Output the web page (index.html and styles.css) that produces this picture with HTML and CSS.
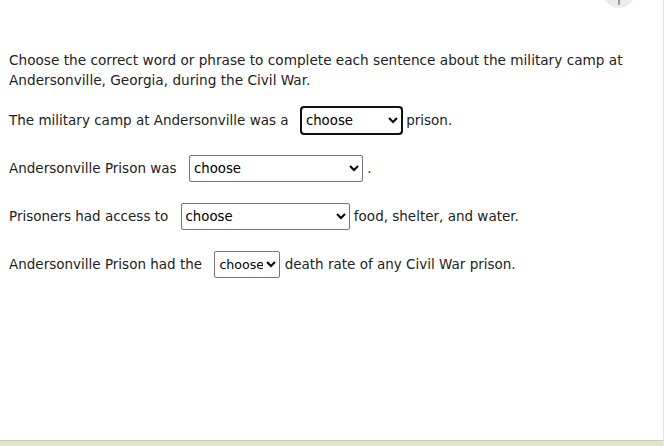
FILE: index.html
```html
<!DOCTYPE html>
<html lang="en">
<head>
<meta charset="utf-8">
<title>Andersonville</title>
<link rel="stylesheet" href="styles.css">
</head>
<body>
<div class="page">
  <div class="handle"><span class="handle-bar"></span></div>
  <main class="content">
    <p class="intro">Choose the correct word or phrase to complete each sentence about the military camp at Andersonville, Georgia, during the Civil War.</p>
    <p class="row">The military camp at Andersonville was a <select class="sel sel-active w1"><option>choose</option></select> prison.</p>
    <p class="row">Andersonville Prison was <select class="sel w2"><option>choose</option></select> .</p>
    <p class="row">Prisoners had access to <select class="sel w3"><option>choose</option></select> food, shelter, and water.</p>
    <p class="row">Andersonville Prison had the <select class="sel w4"><option>choose</option></select> death rate of any Civil War prison.</p>
  </main>
  <footer class="footer"></footer>
</div>
</body>
</html>
```
FILE: styles.css
```css
html, body {
  margin: 0;
  padding: 0;
  background: #fff;
}
.page {
  position: relative;
  width: 663px;
  height: 446px;
  border-right: 1px solid #e4e4e4;
  display: flex;
  flex-direction: column;
  overflow: hidden;
  font-family: "DejaVu Sans", "Liberation Sans", sans-serif;
  color: #222;
}
.handle {
  position: absolute;
  left: 603px;
  top: -24px;
  width: 32px;
  height: 32px;
  border-radius: 50%;
  background: #ececec;
  display: flex;
  justify-content: center;
  align-items: flex-end;
}
.handle-bar {
  width: 2px;
  height: 7px;
  background: #9a9a9a;
  margin-bottom: 3px;
}
.content {
  flex: 1;
  padding: 50px 0 0 9px;
  font-size: 13.65px;
}
.intro {
  margin: 0 0 16px 0;
  line-height: 20px;
}
.row {
  margin: 0 0 20px 0;
  height: 28px;
  line-height: 28px;
  font-size: 13.5px;
  display: flex;
  align-items: center;
  white-space: pre;
}
.sel {
  font-family: "DejaVu Sans", "Liberation Sans", sans-serif;
  font-size: 13.3px;
  height: 27px;
  margin-left: 8px;
  margin-right: 0;
  border: 1px solid #767676;
  border-radius: 2px;
  background: #fff;
  color: #000;
  padding: 0;
}
.sel-active {
  outline: 2px solid #111;
  outline-offset: -1px;
  border-radius: 3px;
}
.w1 { width: 101px; }
.w2 { width: 174px; }
.w3 { width: 169px; }
.w4 { width: 66px; font-size: 12.6px; }
.footer {
  height: 5px;
  border-top: 1px solid #c9cdb8;
  background: #e1e6cb;
}
```
